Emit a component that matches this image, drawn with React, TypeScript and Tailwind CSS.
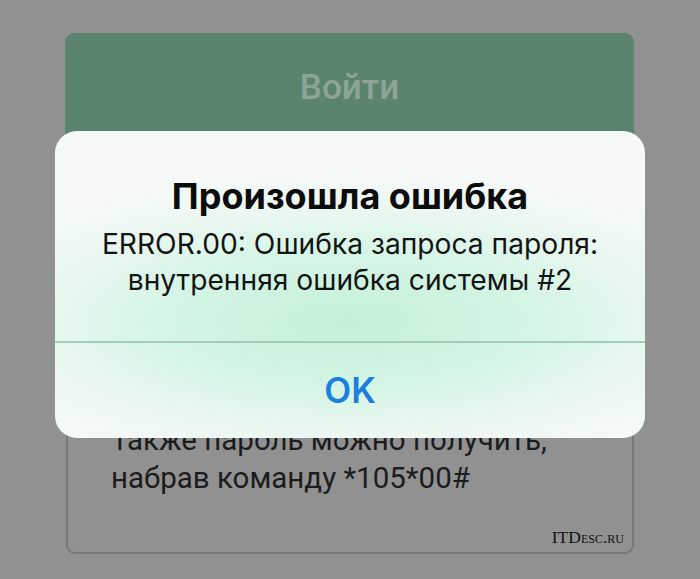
import React from 'react';

const sans = { fontFamily: 'Inter, "Noto Sans", sans-serif' };

export default function App() {
    return (
        <div className="relative w-[700px] h-[579px] overflow-hidden bg-[#919191]" style={sans}>
            <div className="flex flex-col gap-[18px] pt-[33px] pl-[65px] w-[634px]">
                <div className="h-[150px] rounded-[9px] bg-[#5a846e] flex justify-center pt-[34px]">
                    <span className="text-[35px] leading-[42px] font-medium text-[#8ea596]" style={{ fontFamily: 'Roboto, sans-serif' }}>Войти</span>
                </div>
                <div className="h-[353px] ml-px rounded-[9px] border-2 border-[#787878] flex flex-col pl-[43px] pr-2 pb-[6px]">
                    <div className="flex-1 flex flex-col justify-end pb-[31px] text-[29.5px] leading-[38px] text-[#1c1c1c]" style={{ fontFamily: 'Roboto, sans-serif' }}>
                        <p>Также пароль можно получить,</p>
                        <p>набрав команду *105*00#</p>
                    </div>
                    <div className="flex justify-end">
                        <span className="text-[17.5px] leading-[18px] text-[#111] [font-variant:small-caps]" style={{ fontFamily: '"Liberation Serif", serif' }}>ITDesc.ru</span>
                    </div>
                </div>
            </div>

            {/* alert over the page */}
            <div className="absolute left-[55px] top-[131px] w-[590px] h-[307px] rounded-[22px] overflow-hidden flex flex-col bg-[radial-gradient(ellipse_75%_50%_at_50%_62%,#c2f0d7_0%,#d6f5e6_45%,#ecf7f2_75%,#f6f9f8_100%)]">
                <div className="h-[210px] flex flex-col items-center pt-[42px]">
                    <h1 className="text-[36px] leading-[46px] font-bold text-[#0c0c0c]">Произошла ошибка</h1>
                    <p className="mt-[7px] text-[28.2px] leading-[36px] text-[#141414] text-center whitespace-nowrap">
                        ERROR.00: Ошибка запроса пароля:<br />внутренняя ошибка системы #2
                    </p>
                </div>
                <div className="h-[2px] bg-[#a2cdb7]" />
                <div className="flex-1 flex items-center justify-center pb-[2px]">
                    <span className="text-[35px] leading-[40px] font-semibold text-[#1b7fdd]">OK</span>
                </div>
            </div>
        </div>
    );
}
